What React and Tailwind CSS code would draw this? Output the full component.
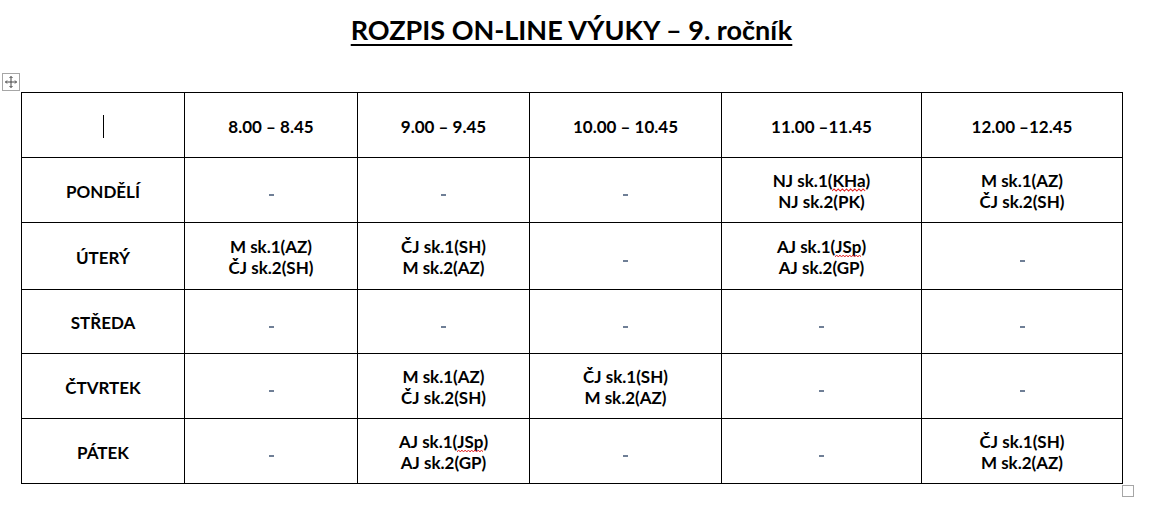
import React from "react";

const FONT = { fontFamily: "Lato, 'Open Sans', 'Liberation Sans', sans-serif" };

function Dash({ up }) {
  return (
    <span
      className={
        "inline-block w-[5px] h-[2px] bg-[#6f7f96] " + (up ? "mt-[5px]" : "mt-[9px]")
      }
    />
  );
}

function Wavy({ children }) {
  return (
    <span className="relative inline-block">
      {children}
      <svg
        className="absolute left-0 bottom-[-1px] w-full h-[4px]"
        viewBox="0 0 32 4"
        preserveAspectRatio="none"
        fill="none"
        stroke="#e02020"
        strokeWidth="1"
      >
        <path d="M0 3L2 1L4 3L6 1L8 3L10 1L12 3L14 1L16 3L18 1L20 3L22 1L24 3L26 1L28 3L30 1L32 3" />
      </svg>
    </span>
  );
}

const rows = [
  {
    day: "PONDĚLÍ",
    h: "h-[65px]",
    cells: [
      "d",
      "du",
      "d",
      [<>NJ sk.1(<Wavy>KHa</Wavy>)</>, "NJ sk.2(PK)"],
      ["M sk.1(AZ)", "ČJ sk.2(SH)"],
    ],
  },
  {
    day: "ÚTERÝ",
    h: "h-[67px]",
    cells: [
      ["M sk.1(AZ)", "ČJ sk.2(SH)"],
      ["ČJ sk.1(SH)", "M sk.2(AZ)"],
      "d",
      [<>AJ sk.1(<Wavy>JSp</Wavy>)</>, "AJ sk.2(GP)"],
      "du",
    ],
  },
  {
    day: "STŘEDA",
    h: "h-[64px]",
    cells: ["d", "du", "d", "du", "du"],
  },
  {
    day: "ČTVRTEK",
    h: "h-[65px]",
    cells: [
      "d",
      ["M sk.1(AZ)", "ČJ sk.2(SH)"],
      ["ČJ sk.1(SH)", "M sk.2(AZ)"],
      "d",
      "d",
    ],
  },
  {
    day: "PÁTEK",
    h: "h-[65px]",
    cells: [
      "d",
      [<>AJ sk.1(<Wavy>JSp</Wavy>)</>, "AJ sk.2(GP)"],
      "d",
      "du",
      ["ČJ sk.1(SH)", "M sk.2(AZ)"],
    ],
  },
];

const times = ["8.00 – 8.45", "9.00 – 9.45", "10.00 – 10.45", "11.00 –11.45", "12.00 –12.45"];

function Cell({ c }) {
  if (c === "d") return <Dash />;
  if (c === "du") return <Dash up />;
  return (
    <div className="leading-[21px] pt-[1px]">
      <div>{c[0]}</div>
      <div>{c[1]}</div>
    </div>
  );
}

export default function App() {
  return (
    <div className="w-[1154px] h-[508px] bg-white text-black relative" style={FONT}>
      <div className="pl-[21px] pt-[12px]">
        <div className="w-[1101px] text-center">
          <span className="text-[27px] font-bold leading-[36px] underline decoration-2 underline-offset-[4px]">
            ROZPIS ON-LINE VÝUKY – 9. ročník
          </span>
        </div>
        <div className="relative mt-[44px]">
          <div className="absolute left-[-19px] top-[-19px] w-[18px] h-[18px] border border-[#a6a6a6] flex items-center justify-center bg-white">
            <svg width="14" height="14" viewBox="0 0 14 14" fill="none" stroke="#444" strokeWidth="1">
              <path d="M7 1.5V12.5M1.5 7H12.5" />
              <path d="M5.5 3L7 1.5L8.5 3M5.5 11L7 12.5L8.5 11M3 5.5L1.5 7L3 8.5M11 5.5L12.5 7L11 8.5" />
            </svg>
          </div>
          <table className="border-collapse table-fixed w-[1101px] text-[17px] font-bold">
            <colgroup>
              <col className="w-[163px]" />
              <col className="w-[173px]" />
              <col className="w-[172px]" />
              <col className="w-[192px]" />
              <col className="w-[200px]" />
              <col className="w-[201px]" />
            </colgroup>
            <tbody>
              <tr className="h-[65px]">
                <td className="border border-black text-center align-middle p-0">
                  <span className="inline-block w-[1px] h-[23px] bg-black align-middle" />
                </td>
                {times.map((t) => (
                  <td key={t} className="border border-black text-center align-middle p-0 pt-[3px]">
                    {t}
                  </td>
                ))}
              </tr>
              {rows.map((r) => (
                <tr key={r.day} className={r.h}>
                  <td className="border border-black text-center align-middle p-0 pt-[3px]">{r.day}</td>
                  {r.cells.map((c, i) => (
                    <td key={i} className="border border-black text-center align-middle p-0">
                      <Cell c={c} />
                    </td>
                  ))}
                </tr>
              ))}
            </tbody>
          </table>
          <div className="absolute right-[20px] bottom-[-13px] w-[12px] h-[12px] border border-[#a6a6a6]" />
        </div>
      </div>
    </div>
  );
}
